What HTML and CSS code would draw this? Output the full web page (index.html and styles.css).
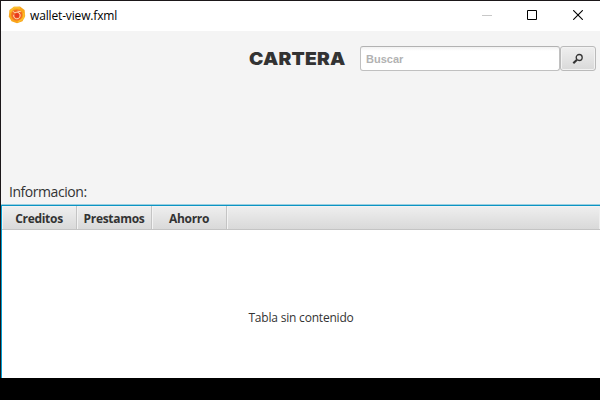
FILE: index.html
```
<!DOCTYPE html>
<html lang="es">
<head>
<meta charset="utf-8">
<title>wallet-view.fxml</title>
<link rel="stylesheet" href="styles.css">
</head>
<body>
<div class="window">
  <header class="titlebar">
    <svg class="app-icon" width="18" height="18" viewBox="0 0 18 18">
      <path d="M6 .8 12 .6 16.6 4 17.2 10 14.5 15.2 9 17.2 3.5 15.2.8 10.5 1.5 4Z" fill="#f9a51a"/>
      <path d="M2 6 6 1.5 12 2M16 7 15.5 12 10 16" fill="none" stroke="#fbc02d" stroke-width="1.5"/>
      <circle cx="8.8" cy="9" r="5.6" fill="#f26a24"/>
      <circle cx="9" cy="9.4" r="2.4" fill="#e8391f"/>
      <path d="M5 5.2 6.8 7C8.5 5.6 11.2 6.2 12 8.2 12.8 10.8 11 13 8.7 12.8 6.4 12.6 5.2 10.6 5.8 8.8M9.5 5.2 12.8 5.6" fill="none" stroke="#ffe3c4" stroke-width=".9"/>
    </svg>
    <span class="title">wallet-view.fxml</span>
    <div class="controls">
      <svg width="10" height="10"><path d="M0 5.5H10" stroke="#c8c8c8"/></svg>
      <svg width="10" height="10"><path d="M.5.5H9.5V9.5H.5Z" fill="none" stroke="#000"/></svg>
      <svg class="close" width="10" height="10"><path d="M.2.2 9.8 9.8M9.8.2.2 9.8" stroke="#000" stroke-width="1.1"/></svg>
    </div>
  </header>
  <section class="top">
    <div class="search-row">
      <h1 class="heading">CARTERA</h1>
      <input class="search" type="text" placeholder="Buscar">
      <button class="search-button" type="button" aria-label="Buscar">
        <svg width="12" height="12" viewBox="0 0 12 12"><circle cx="7.2" cy="4.5" r="3" fill="none" stroke="#333" stroke-width="1.3"/><path d="M5 6.8 1.3 10.2" stroke="#333" stroke-width="2.2"/></svg>
      </button>
    </div>
    <p class="info">Informacion:</p>
  </section>
  <main class="table">
    <div class="columns">
      <div class="column"><span>Creditos</span></div>
      <div class="column"><span>Prestamos</span></div>
      <div class="column"><span>Ahorro</span></div>
      <div class="filler"></div>
    </div>
    <div class="placeholder">Tabla sin contenido</div>
  </main>
</div>
</body>
</html>
```
FILE: styles.css
```
* { box-sizing: border-box; }
body {
  margin: 0;
  background: #000;
  color: #333;
  font-family: "Open Sans", "Noto Sans", sans-serif;
}
.window {
  width: 600px;
  height: 378px;
  display: flex;
  flex-direction: column;
  background: #f4f4f4;
  border-top: 1px solid #1b1719;
  border-left: 1px solid #1b1719;
}
.titlebar {
  height: 30px;
  flex: none;
  display: flex;
  align-items: center;
  padding: 0 17px 0 7px;
  background: #fff;
}
.app-icon { margin-top: -2px; }
.title {
  margin-left: 4px;
  color: #000;
  font-size: 12px;
  line-height: 16px;
  letter-spacing: -0.15px;
}
.controls {
  display: flex;
  gap: 35px;
  margin: -2px 0 0 auto;
}
.controls svg { display: block; }
.controls .close { margin-left: 1px; }
.top {
  height: 174px;
  flex: none;
  display: flex;
  flex-direction: column;
  justify-content: space-between;
  padding: 15px 4px 3px 8px;
}
.search-row {
  display: flex;
  align-items: center;
  justify-content: flex-end;
}
.heading {
  width: 97px;
  margin: 0 14px 0 0;
  font: 900 18px/25px Inter, sans-serif;
  letter-spacing: 0.2px;
  white-space: nowrap;
  transform: scaleX(1.07);
  transform-origin: left;
}
.search {
  width: 200px;
  height: 25px;
  padding: 1px 5px 0;
  border: 1px solid #c0c0c0;
  border-top-color: #b2b2b2;
  border-radius: 3px;
  outline: 0;
  background: linear-gradient(#f1f1f1, #fff 4px);
  font: bold 11px "Liberation Sans", sans-serif;
}
.search::placeholder { color: #b2b2b2; opacity: 1; }
.search-button {
  width: 36px;
  height: 25px;
  display: flex;
  align-items: center;
  justify-content: center;
  padding: 0;
  border: 1px solid #bababa;
  border-radius: 3px;
  background: linear-gradient(#efefef, #d9d9d9);
  box-shadow: inset 0 0 0 1px #f2f2f2;
}
.info {
  margin: 0;
  font-size: 14px;
  line-height: 20px;
  letter-spacing: -0.45px;
}
.table {
  flex: 1;
  display: flex;
  flex-direction: column;
  border-top: 1px solid #0b94c4;
  border-left: 1px solid #039ed3;
  box-shadow: 0 -1px #9acfdf;
  background: #fff;
}
.columns {
  height: 24px;
  display: flex;
  border-bottom: 1px solid #c4c4c4;
  background: linear-gradient(#efefef, #d9d9d9);
}
.column {
  width: 75px;
  display: flex;
  align-items: center;
  justify-content: center;
  border-right: 1px solid #c4c4c4;
  box-shadow: inset 1px 1px #f3f3f3;
  font-size: 12px;
  font-weight: 700;
  line-height: 16px;
  letter-spacing: -0.3px;
}
.column span { margin-top: 3px; }
.filler {
  flex: 1;
  border-right: 1px solid #eee;
  box-shadow: inset 1px 1px #f3f3f3;
}
.placeholder {
  flex: 1;
  display: flex;
  align-items: center;
  justify-content: center;
  padding-top: 28px;
  font-size: 12px;
  line-height: 16px;
  letter-spacing: -0.2px;
}
```
